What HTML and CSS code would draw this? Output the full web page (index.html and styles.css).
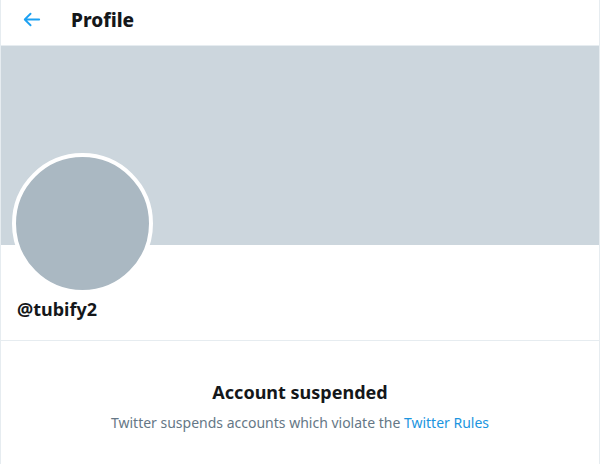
FILE: index.html
```html
<!DOCTYPE html>
<html>
<head>
<meta charset="utf-8">
<link rel="stylesheet" href="styles.css">
</head>
<body>
<div class="column">
  <header class="topbar">
    <svg class="back" viewBox="0 0 24 24"><path d="M20 11H7.414l4.293-4.293a1 1 0 0 0-1.414-1.414l-6 6a1 1 0 0 0 0 1.414l6 6a.996.996 0 0 0 1.414 0 1 1 0 0 0 0-1.414L7.414 13H20a1 1 0 1 0 0-2z"/></svg>
    <h1 class="title">Profile</h1>
  </header>
  <div class="banner"></div>
  <div class="profile">
    <div class="avatar"></div>
    <div class="handle">@tubify2</div>
  </div>
  <div class="suspended">
    <h2 class="s-title">Account suspended</h2>
    <p class="s-text">Twitter suspends accounts which violate the <a href="#" class="link">Twitter Rules</a></p>
  </div>
</div>
</body>
</html>
```

FILE: styles.css
```css
html, body {
  margin: 0;
  padding: 0;
  background: #fff;
}
body {
  font-family: "Noto Sans", "Open Sans", sans-serif;
  color: #14171a;
}
.column {
  width: 598px;
  height: 464px;
  border-left: 1px solid #e6ecf0;
  border-right: 1px solid #e6ecf0;
  box-sizing: content-box;
  overflow: hidden;
}
.topbar {
  height: 39px;
  padding-bottom: 6px;
  border-bottom: 1px solid #e6ecf0;
  display: flex;
  align-items: center;
  padding-left: 19px;
  box-sizing: content-box;
}
.back {
  fill: #1da1f2;
  width: 23px;
  height: 23px;
  margin-right: 28px;
}
.title {
  margin: 0;
  font-size: 19px;
  font-weight: 800;
  line-height: 24px;
}
.banner {
  height: 199px;
  background: #ccd6dd;
}
.profile {
  position: relative;
  height: 95px;
  border-bottom: 1px solid #e6ecf0;
  padding-left: 16px;
}
.avatar {
  position: absolute;
  left: 11px;
  top: -92px;
  width: 133px;
  height: 133px;
  border-radius: 50%;
  background: #aab8c2;
  border: 4px solid #fff;
}
.handle {
  padding-top: 52px;
  font-size: 18px;
  font-weight: 700;
  line-height: 24px;
}
.suspended {
  text-align: center;
  padding-top: 37px;
}
.s-title {
  margin: 0;
  font-size: 18px;
  font-weight: 700;
  line-height: 28px;
}
.s-text {
  margin: 7px 0 0;
  font-size: 14px;
  color: #657786;
  line-height: 20px;
}
.link {
  color: #1b95e0;
  text-decoration: none;
}
```
